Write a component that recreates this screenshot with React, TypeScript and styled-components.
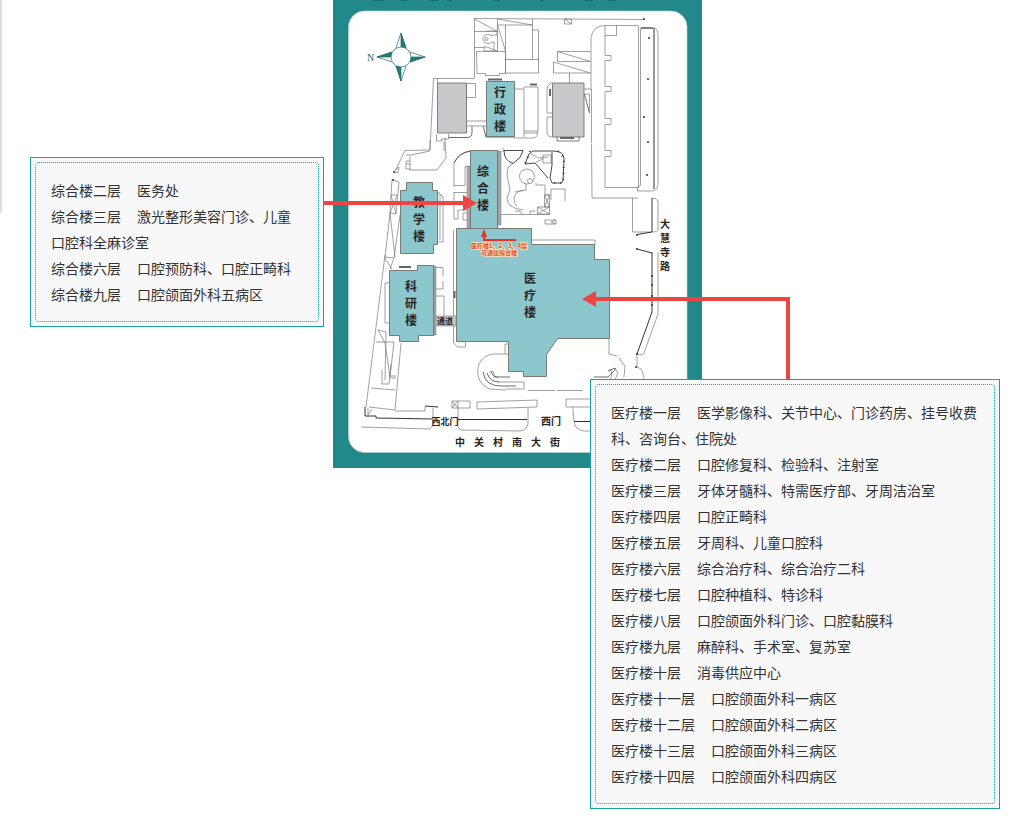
import React from 'react';
import styled, { createGlobalStyle } from 'styled-components';

const GlobalStyle = createGlobalStyle`
  body {
    margin: 0;
    background: #fff;
    color: #333;
    font: 14px/26px "Noto Sans CJK SC", sans-serif;
  }
`;

const Page = styled.main`
  display: flex;
  align-items: flex-start;
  min-width: 1000px;
`;

const Rail = styled.div`
  box-sizing: border-box;
  flex: 0 0 30px;
  height: 213px;
  border-left: 2px solid #ddd;
`;

const Callout = styled.section<{ $width: number; $top: number; $overlap?: number }>`
  position: relative;
  box-sizing: border-box;
  flex: 0 0 ${(p) => p.$width}px;
  margin-top: ${(p) => p.$top}px;
  margin-left: ${(p) => -(p.$overlap ?? 0)}px;
  padding: 4px;
  border: 1px solid #18a0a5;
  background: #f8f8f8;
`;

const FloorList = styled.ul`
  margin: 0;
  padding: 14px 15px;
  list-style: none;
  border: 1px dotted #18a0a5;
  border-radius: 4px;
`;

const Floor = styled.span`
  margin-right: 16px;
`;

const ArrowToComplex = styled.svg`
  position: absolute;
  top: 36px;
  left: 100%;
  z-index: 2;
`;

const ArrowToMedical = styled.svg`
  position: absolute;
  left: -9px;
  bottom: 100%;
`;

const MapFrame = styled.figure`
  flex: 0 0 369px;
  margin: 0 0 0 9px;
  line-height: 0;
`;

type FloorInfo = { floor: string; rooms: string };

const complexFloors: FloorInfo[] = [
  { floor: '综合楼二层', rooms: '医务处' },
  { floor: '综合楼三层', rooms: '激光整形美容门诊、儿童口腔科全麻诊室' },
  { floor: '综合楼六层', rooms: '口腔预防科、口腔正畸科' },
  { floor: '综合楼九层', rooms: '口腔颌面外科五病区' },
];

const medicalFloors: FloorInfo[] = [
  { floor: '医疗楼一层', rooms: '医学影像科、关节中心、门诊药房、挂号收费科、咨询台、住院处' },
  { floor: '医疗楼二层', rooms: '口腔修复科、检验科、注射室' },
  { floor: '医疗楼三层', rooms: '牙体牙髓科、特需医疗部、牙周洁治室' },
  { floor: '医疗楼四层', rooms: '口腔正畸科' },
  { floor: '医疗楼五层', rooms: '牙周科、儿童口腔科' },
  { floor: '医疗楼六层', rooms: '综合治疗科、综合治疗二科' },
  { floor: '医疗楼七层', rooms: '口腔种植科、特诊科' },
  { floor: '医疗楼八层', rooms: '口腔颌面外科门诊、口腔黏膜科' },
  { floor: '医疗楼九层', rooms: '麻醉科、手术室、复苏室' },
  { floor: '医疗楼十层', rooms: '消毒供应中心' },
  { floor: '医疗楼十一层', rooms: '口腔颌面外科一病区' },
  { floor: '医疗楼十二层', rooms: '口腔颌面外科二病区' },
  { floor: '医疗楼十三层', rooms: '口腔颌面外科三病区' },
  { floor: '医疗楼十四层', rooms: '口腔颌面外科四病区' },
];

const Floors = ({ items }: { items: FloorInfo[] }) => (
  <FloorList>
    {items.map((item) => (
      <li key={item.floor}>
        <Floor>{item.floor}</Floor>
        {item.rooms}
      </li>
    ))}
  </FloorList>
);

const MapText = styled.text`
  font-family: "Noto Sans CJK SC", sans-serif;
  font-weight: 700;
  fill: #2a2422;
  text-anchor: middle;
`;

const VerticalName = ({ name, x, y, step = 17, size = 12 }: {
  name: string; x: number; y: number; step?: number; size?: number;
}) => (
  <MapText fontSize={size}>
    {[...name].map((char, i) => (
      <tspan key={i} x={x} y={y + i * step}>{char}</tspan>
    ))}
  </MapText>
);

const CampusMap = () => (
  <svg width="369" height="468" viewBox="333 0 369 468" role="img" aria-label="院区平面图">
    <rect x="333" y="0" width="369" height="468" fill="#23888a" />
    <rect x="348.500" y="11" width="338.500" height="441.500" rx="16" fill="#fff" stroke="#b9cfcb" strokeWidth=".7" />
    <path d="M373 0h11M401 0h6M430 0h8M447 0h5M494 0h6M540 0h4M585 0h8M608 0h8" stroke="#176c70" strokeWidth="2" />

    {/* compass */}
    <g stroke="#206e68" strokeWidth=".7" fill="#fff">
      <path d="M401 33l5 15-5 5-5-5zM401 81l5-15-5-5-5 5zM377 57l15-5 5 5-5 5zM425 57l-15-5-5 5 5 5z" />
      <path d="M401 33l5 15-5 3zM401 81l-5-15 5-3zM377 57l15-5v5zM425 57l-15 5v-5z" fill="#207c76" />
      <circle cx="401" cy="57" r="10" />
    </g>
    <text x="367" y="61" fontFamily="Liberation Serif, serif" fontSize="10" fill="#206e68">N</text>

    <g fill="none" stroke="#777" strokeWidth=".7">
      {/* north-west outbuildings */}
      <path d="M644 19.500L474.500 18.500v60M474.500 19l23 12.500M474.500 31.500h23M474.500 47.500h10M497.500 18.500v33M497.500 19l35 6M497.500 25h35M532.500 18.500v41M497.500 25l8 26M505.500 25v48M505.500 59.500h33v13.500h-33M532.500 30h6v30M476.500 51.500h29v22h-6v2h-14v-2h-8.500z" />
      <path d="M492 36c-4-3-9-1-9 3s5 6 9 3h2v9M486 31h11v4h-6M484 47h3l10 4h-13v-4" />
      <circle cx="486.500" cy="39" r="1.500" />
      <path d="M564.500 19v5h7v-5zM564.500 19l7 5M557.500 51.500h33M557.500 51.500v10h33M557.500 51.500l33 10M553.500 62v11h37M553.500 62l37 11M569.500 73v10" />
      <path d="M474 78.500H433.500L430 150M437.500 78.500v5M466.500 83.500h9v14h-9zM466.500 121h20M466.500 126h20M436.500 134v7h5v-2h7v-5M444 141v10" />
      <path d="M514.500 89h9M524 87h14v44h-14zM524 131v6M514.500 138h18q5 0 5-5v-2M524 133h13" />
      <path d="M552 83h-1q-4 2-4 7v23h5M552 117h-5v15q0 5 5 5M584.500 94h5v19zM584.500 94l5 19M584 89h7M591.500 89v54" />
      <path d="M557 137v4h22v-4" stroke="#444" />

      {/* eastern block */}
      <path d="M638 25.500H605q-12 0-14 12v52M591.500 144l.5 54h46M605 25.500v30h6v5h-6v26h6v5h-6v27h6v6h-6v26h6v6h-6v31h33M605 35.500h11.500v-10M638.500 26v162M640.500 28v157l-3 3v3h14M641 28h13q4 1 4 7v148q0 8-6 8M632.500 198v34h18M652 198q5 0 6 3v28q0 3-6 3" />

      {/* north-west yard */}
      <path d="M430 140v10l-25 .5-10 21M430 151l-19 4h-5M410 156v14h27l9-12-1-20M406 161h4M406 164h4M406 161v8h4M395 170l4-3-1 6-4-1" />
      <path d="M454 187v-24q5-10 17-12M454 185.500h11v-19h5M454 192.500h13M454 192v27h4v-9h9M463 213v7h5M463 213h4" />

      {/* western wall */}
      <path d="M392 180l7 2-3 32-6-1 1-18zM391 195h6M397 195l-7 18M391 195l5 19M390 213l-5 44 9 1 6-43M390 213l5 44" />
      <path d="M438 192l5 5v45h-5M440 194v46M453.500 230v113l4 4h8v-5" />
      <path d="M385 255l-19 152M394 258l-4 11M384 257l8 12M389 283h-4v40h4M378 330l8 2-1 48M378 330l7 13M376 342h18l-4 35-5-34M390 378h6M401 343l-6 67M371 388l24 2M369 407l26 3M382 370v14h7l2-20M390 376h6" />
      <path d="M436 267.500h7v9M443 281v8h-7M436 296h8v20" />

      {/* south gates */}
      <path d="M395 411h30v-4M433 408v17l-3 4-69-2M368 408v7l4-6" />
      <path d="M452 401h18v7h-18zM458 401v7M452 401l6 7M458 401l-6 7M477 402l60-2v7l-60 2zM458 408v19l3 3 59 1q7-1 8-7v-16" />
      <path d="M566 399h26M566 399v8h26M573 407q0 15 3 20 4 5 14 4" />
      <path d="M498 382h26v7h-18M528 390.500h27M557 390.500h26" />
      <path d="M508 354h-14c-20 1-22 29-4 35l16 1M508 344h-3v10M498 377h-3l-2-6-4 1" />
      <path d="M609 338v16l8 2M619 358l6 8-1 11M615 368q5 5 0 11M610 369q4 6 0 10" />
      <path d="M532 240h63v5M658 252v62l-14 39q-2 3-7 1v13M637 367q6 1 7 12" />
    </g>

    <g fill="none" stroke="#444" strokeWidth=".8">
      <path d="M483 372q2 14 18 14h15M487 373q3 9 12 9M491 372q2 4 4 5h15" />
      <path d="M594 377h14l7-7v-2l-7 3" />
      <path d="M454 163q5-11 17-12" />
      <path d="M449 137.500h18q5 0 5-5v-6M483 126l3 11h29" />
    </g>

    {/* gardens east of the complex building */}
    <g fill="none" stroke="#777" strokeWidth=".7">
      <path d="M503 148v4M513 163l-5 5-1 7 3 15-3 8q0 10 16 12M500 214.500h50M523 190q-9 2-9 9 0 5 3 7" />
      <circle cx="527" cy="176.500" r="7.500" />
      <circle cx="530" cy="181" r="2.500" fill="#fff" />
      <path d="M526 184v6l-11 2M536 183v2h9v10h5M551 200v-11h14v12M544.500 195h5v12h-5zM544.500 195l5 12M549.500 195l-5 12M537.500 207h12v7h-12zM537.500 207l12 7M549.500 207l-12 7M515 211h5l2 3M530 214v-3h5" />
      <path d="M545 220h11v4h-11zM556 220l-5 2 5 2" />
      <path d="M531 154l8 4 9-1M543 155h8v8h-8zM536 162l7-3" />
    </g>
    <g fill="none" stroke="#333" strokeWidth=".9">
      <path d="M504 150.500h19l-3 7-7 6q-9-3-9-13" />
      <path d="M525 164l4-10 4-3h20q11 0 11 8l-1 22-2 2h-9l-2-5 2-13v-13M525 164l10-1 13 15" />
      <path d="M530 151l-5 13M558 151l6 7-1 25h-12" strokeWidth="2" strokeDasharray="1 5" />
    </g>

    {/* buildings */}
    <g fill="#c8c8cb" stroke="#666" strokeWidth=".8">
      <path d="M437.500 83h29v50h-29zM552.500 83h31.500v54h-31.500z" />
    </g>
    <g fill="#8cc7cd" stroke="#777c70">
      <path d="M486.500 81.500h28v55h-28zM470.500 150.500h27v78h-27zM406.500 182.500h26v8h5v54h-4v9h-33v-63h6z" />
      <path d="M389.500 270.500h28v-5h16v70h-15v6h-19v-6h-10zM456.500 228.500h75v16h63v15h15v79h-52l-11 16v22h-23v-5h-15v-30h-52z" />
    </g>
    <path d="M434 316h22v10h-22z" fill="#c2c9c3" stroke="#888" strokeWidth=".7" />
    <path d="M498 151h3v74h-3zM467 166h3v62h-3zM434 266h2v69h-2z" fill="#aaa" stroke="#777" strokeWidth=".5" />
    <path d="M488 79.500h14M399 267h12M454.500 291v7M530 84.500h7M550 89v7M560 138h14" stroke="#666" strokeWidth="2" />
    <path d="M365 407v9h11v2l57 1M425 406l13 1M458 419.500h69M574 421.500h18M652 252v60l-15 42M654 28v161M652 198v34M637 234.500l15-2.500M637 249l15 4M641 28h12" fill="none" stroke="#333" strokeWidth="1" />
    <g fill="#333">
      {[[644, 19], [649, 38], [648, 79], [644, 117], [648, 142], [647, 175], [652, 276], [652, 285], [652, 296], [652, 305], [637, 235], [637, 249], [637, 354], [636, 367], [394, 172], [393, 180]].map(([x, y]) => (
        <circle key={`${x}-${y}`} cx={x} cy={y} r="1" />
      ))}
    </g>

    <VerticalName name="行政楼" x={500} y={97} />
    <VerticalName name="综合楼" x={483} y={176} />
    <VerticalName name="教学楼" x={419} y={207} />
    <VerticalName name="科研楼" x={411} y={291} />
    <VerticalName name="医疗楼" x={530} y={283} />
    <VerticalName name="大慧寺路" x={665} y={228} step={14} size={10} />
    <MapText x="445" y="324" fontSize="8">通道</MapText>
    <MapText x="445" y="425" fontSize="9">西北门</MapText>
    <MapText x="551" y="425" fontSize="10">西门</MapText>
    <MapText fontSize="10">
      {[...'中关村南大街'].map((char, i) => (
        <tspan key={char} x={460 + i * 19} y={446}>{char}</tspan>
      ))}
    </MapText>

    {/* passage note on the medical building */}
    <path d="M484 236v4h32" fill="none" stroke="#e83226" strokeWidth="2" />
    <path d="M484 229l3 8h-6z" fill="#e83226" />
    <g fill="#e84a26" stroke="#fbe3b4" strokeWidth="1.500" paintOrder="stroke" textAnchor="middle" fontWeight="700" fontSize="6" fontFamily="Noto Sans CJK SC, sans-serif">
      <text x="499" y="248">医疗楼1、2、3、4层</text>
      <text x="499" y="255">可通往综合楼</text>
    </g>
  </svg>
);

const App = () => (
  <>
    <GlobalStyle />
    <Page>
      <Rail />
      <Callout $width={294} $top={157}>
        <Floors items={complexFloors} />
        <ArrowToComplex width="154" height="18" viewBox="0 0 154 18" aria-hidden="true">
          <path d="M0 7h140V1l14 8-14 8v-6H0z" fill="#ef4444" />
        </ArrowToComplex>
      </Callout>
      <MapFrame>
        <CampusMap />
      </MapFrame>
      <Callout $width={410} $top={379} $overlap={112}>
        <Floors items={medicalFloors} />
        <ArrowToMedical width="210" height="90" viewBox="0 0 210 90" aria-hidden="true">
          <path d="M0 9l14-8v6h194v83h-4V11H14v6z" fill="#ef4444" />
        </ArrowToMedical>
      </Callout>
    </Page>
  </>
);

export default App;
